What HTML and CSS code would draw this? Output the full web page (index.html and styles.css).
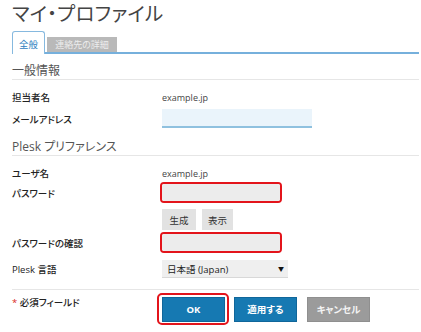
FILE: index.html
```html
<!DOCTYPE html>
<html lang="ja">
<head>
<meta charset="utf-8">
<title>マイ・プロファイル</title>
<link rel="stylesheet" href="styles.css">
</head>
<body>
<div class="page">
  <h1 class="title">マイ・プロファイル</h1>
  <div class="tabs">
    <div class="tab tab-active">全般</div>
    <div class="tab tab-off">連絡先の詳細</div>
  </div>

  <div class="section">一般情報</div>
  <div class="row row-owner">
    <div class="label">担当者名</div>
    <div class="value">example.jp</div>
  </div>
  <div class="row row-mail">
    <div class="label">メールアドレス</div>
    <div class="email"></div>
  </div>

  <div class="section section-2">Plesk プリファレンス</div>
  <div class="row row-user">
    <div class="label">ユーザ名</div>
    <div class="value">example.jp</div>
  </div>
  <div class="row row-pass">
    <div class="label">パスワード</div>
    <div class="hl"><div class="input"></div></div>
  </div>
  <div class="row row-gen">
    <div class="label"></div>
    <div class="small-btns">
      <span class="sbtn sbtn-gen">生成</span>
      <span class="sbtn sbtn-show">表示</span>
    </div>
  </div>
  <div class="row row-confirm">
    <div class="label">パスワードの確認</div>
    <div class="hl"><div class="input"></div></div>
  </div>
  <div class="row row-lang">
    <div class="label">Plesk 言語</div>
    <div class="select"><span>日本語 (Japan)</span><span class="arrow">▼</span></div>
  </div>

  <div class="footer">
    <div class="label req"><span class="star">*</span> 必須フィールド</div>
    <div class="actions">
      <div class="hl-btn"><span class="btn btn-blue btn-ok">OK</span></div>
      <span class="btn btn-blue btn-apply">適用する</span>
      <span class="btn btn-gray btn-cancel">キャンセル</span>
    </div>
  </div>
</div>
</body>
</html>
```

FILE: styles.css
```css
html, body {
  margin: 0;
  padding: 0;
  background: #ffffff;
}

.page {
  padding: 0 2px 0 12px;
  font-family: "Open Sans", "Noto Sans CJK JP", sans-serif;
  font-feature-settings: "palt";
  color: #333;
}

.title {
  margin: 0;
  font-size: 19.5px;
  line-height: 28px;
  font-weight: normal;
  color: #444;
  letter-spacing: 0.3px;
}

.tabs {
  margin-top: 3px;
  display: flex;
  align-items: flex-end;
  border-bottom: 2px solid #76b0dc;
  height: 21px;
}

.tab {
  box-sizing: border-box;
  display: flex;
  align-items: center;
  justify-content: center;
  font-size: 9.5px;
}

.tab-active {
  width: 33px;
  height: 23px;
  margin-bottom: -2px;
  background: #fff;
  border: 1px solid #86b9df;
  border-bottom: 0;
  border-radius: 3px 3px 0 0;
  color: #2f80c0;
  padding-top: 1px;
}

.tab-off {
  width: 70px;
  height: 15px;
  margin-left: 2px;
  background: #b9b9b9;
  color: #ececec;
  font-size: 9px;
}

.section {
  padding-top: 9px;
  line-height: 16px;
  font-size: 12px;
  color: #555;
  border-bottom: 1px solid #e6e6e6;
}

.section-2 {
  padding-top: 11px;
}

.row {
  display: flex;
  align-items: center;
}

.label {
  width: 150px;
  flex: none;
  font-size: 9.5px;
  font-weight: 500;
  color: #222;
}

.value {
  font-size: 9px;
  color: #444;
}

.row-owner { margin-top: 7px; height: 20px; }
.row-mail { margin-top: 2px; height: 19px; }
.row-user { margin-top: 8px; height: 18px; }
.row-pass { height: 21px; }
.row-gen { margin-top: 6px; height: 21px; }
.row-confirm { margin-top: 2px; height: 21px; }
.row-lang { margin-top: 7px; height: 18px; }

.email {
  box-sizing: border-box;
  width: 150px;
  height: 19px;
  background: #eaf4fb;
  border-bottom: 2px solid #8fc1df;
}

.hl {
  margin-left: -2px;
  border: 2px solid #e3141b;
  border-radius: 4px;
}

.input {
  width: 118px;
  height: 17px;
  background: #ececec;
  border-radius: 2px;
}

.small-btns {
  display: flex;
  gap: 6px;
}

.sbtn {
  height: 21px;
  display: flex;
  align-items: center;
  justify-content: center;
  background: #e2e2e2;
  font-size: 9.5px;
  color: #333;
}

.sbtn-gen { width: 34px; }
.sbtn-show { width: 31px; }

.select {
  box-sizing: border-box;
  width: 126px;
  height: 18px;
  display: flex;
  align-items: center;
  justify-content: space-between;
  padding: 0 4px 0 5px;
  background: #efefef;
  border-bottom: 1px solid #d8d8d8;
  font-size: 9.5px;
  color: #222;
}

.arrow {
  font-size: 6px;
  color: #111;
}

.footer {
  margin-top: 11px;
  border-top: 1px solid #e6e6e6;
  padding-top: 3px;
  display: flex;
  align-items: flex-start;
}

.req {
  margin-top: 3px;
  line-height: 14px;
}

.star {
  color: #d9261c;
}

.actions {
  display: flex;
  align-items: center;
}

.hl-btn {
  margin-left: -5px;
  border: 2px solid #e3141b;
  border-radius: 5px;
  padding: 2px 2px 1px 3px;
  display: flex;
}

.btn {
  box-sizing: border-box;
  width: 63px;
  height: 25px;
  display: flex;
  align-items: center;
  justify-content: center;
  font-size: 9.5px;
  font-weight: bold;
}

.btn-blue {
  background: #1679b2;
  border: 1px solid #10669a;
  color: #fff;
}

.btn-apply {
  margin-left: 5px;
}

.btn-gray {
  background: #9b9b9b;
  border: 1px solid #8f8f8f;
  color: #f4f4f4;
  margin-left: 10px;
}
```
